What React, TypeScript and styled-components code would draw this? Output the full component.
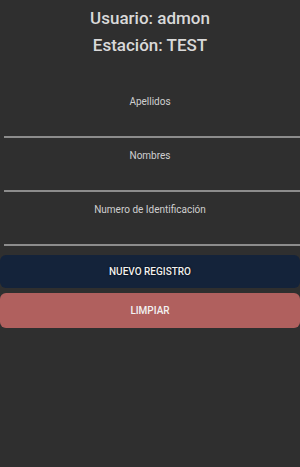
import { FC } from 'react';
import styled, { createGlobalStyle } from 'styled-components';

const GlobalStyle = createGlobalStyle`
  html, body {
    margin: 0;
    padding: 0;
    background: #2f2f2f;
  }
  body {
    font-family: Roboto, "Open Sans", sans-serif;
    color: #d6d6d6;
  }
`;

const Page = styled.div`
  display: flex;
  flex-direction: column;
  min-height: 467px;
  background: #2f2f2f;
`;

const Header = styled.header`
  display: flex;
  flex-direction: column;
  align-items: center;
  padding-top: 7px;
  gap: 5px;
`;

const Title = styled.h2`
  margin: 0;
  font-size: 17px;
  line-height: 22px;
  font-weight: 500;
  color: #d9d9d9;
`;

const Form = styled.form`
  display: flex;
  flex-direction: column;
  padding-top: 39px;
`;

const Field = styled.label`
  display: flex;
  flex-direction: column;
  align-items: center;
  margin-bottom: 11px;
`;

const Label = styled.span`
  font-size: 10px;
  line-height: 14px;
  color: #cfcfcf;
`;

const Input = styled.input`
  align-self: stretch;
  margin-left: 4px;
  height: 27px;
  padding: 0;
  border: none;
  border-bottom: 2px solid #8c8c8c;
  background: transparent;
  color: #e0e0e0;
  font: inherit;
  font-size: 12px;
  text-align: center;
  outline: none;
`;

const Actions = styled.div`
  display: flex;
  flex-direction: column;
  gap: 5px;
  margin-top: -2px;
`;

const Button = styled.button<{ $tone: 'primary' | 'danger' }>`
  width: 100%;
  height: ${(p) => (p.$tone === 'primary' ? 33 : 35)}px;
  border: none;
  border-radius: 6px;
  background: ${(p) => (p.$tone === 'primary' ? '#14233a' : '#b0605e')};
  color: #f2f2f2;
  font-family: Roboto, sans-serif;
  font-size: 10px;
  font-weight: 500;
  text-shadow: ${(p) => (p.$tone === 'primary' ? '0 0 2px #000' : 'none')};
  cursor: pointer;
`;

const fields = ['Apellidos', 'Nombres', 'Numero de Identificación'];

const App: FC = () => (
  <Page>
    <GlobalStyle />
    <Header>
      <Title>Usuario: admon</Title>
      <Title>Estación: TEST</Title>
    </Header>
    <Form onSubmit={(e) => e.preventDefault()}>
      {fields.map((f) => (
        <Field key={f}>
          <Label>{f}</Label>
          <Input type="text" />
        </Field>
      ))}
      <Actions>
        <Button type="submit" $tone="primary">NUEVO REGISTRO</Button>
        <Button type="reset" $tone="danger">LIMPIAR</Button>
      </Actions>
    </Form>
  </Page>
);

export default App;
